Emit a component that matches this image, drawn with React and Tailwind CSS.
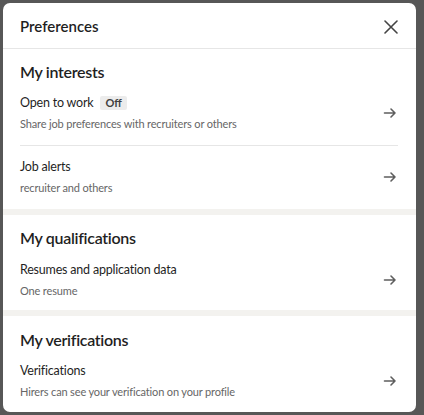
import React from "react";

function Arrow() {
  return (
    <svg width="14" height="12" viewBox="0 0 14 12" fill="none" className="shrink-0">
      <path d="M1.5 6H12M8 2l4 4-4 4" stroke="#5e5e5e" strokeWidth="1.6" strokeLinecap="round" strokeLinejoin="round" />
    </svg>
  );
}

function Item({ title, badge, subtitle, border, pt = "pt-[10px]", pb = "pb-[12px]" }) {
  return (
    <div className={`flex items-center justify-between ${pt} ${pb} ${border ? "border-b border-[#e6e6e6]" : ""}`}>
      <div className="flex flex-col">
        <div className="flex items-center h-[20px]">
          <span className="text-[12.5px] tracking-[-0.2px] text-[#1f1f1f]">{title}</span>
          {badge && (
            <span className="ml-[7px] px-[5px] h-[14px] flex items-center rounded-[2px] bg-[#ececec] text-[11px] font-bold text-[#404040]">
              {badge}
            </span>
          )}
        </div>
        <div className="mt-[3px] h-[16px] leading-[16px] text-[11px] tracking-[-0.15px] text-[#666]">{subtitle}</div>
      </div>
      <div className="mr-[1px]"><Arrow /></div>
    </div>
  );
}

export default function App() {
  return (
    <div
      className="w-[424px] h-[415px] bg-[#575757] pt-[3px] pl-[3px] overflow-hidden"
      style={{ fontFamily: 'Lato, "Noto Sans", sans-serif' }}
    >
      <div className="w-[413px] h-[409px] bg-white rounded-[7px] overflow-hidden flex flex-col">
        <div className="h-[46px] pt-[2px] shrink-0 flex items-center justify-between pl-[17px] pr-[18px] border-b border-[#e6e6e6]">
          <span className="text-[15px] font-semibold text-[#1f1f1f]">Preferences</span>
          <svg width="14" height="14" viewBox="0 0 14 14" fill="none">
            <path d="M1 1l12 12M13 1L1 13" stroke="#444" strokeWidth="1.6" strokeLinecap="round" />
          </svg>
        </div>

        <div className="pl-[17px] pr-[18px]">
          <div className="pt-[11px] h-[35px] leading-[24px] text-[16px] tracking-[-0.3px] font-semibold text-[#1f1f1f]">My interests</div>
          <Item title="Open to work" badge="Off" subtitle="Share job preferences with recruiters or others" border pt="pt-[9px]" pb="pb-[13px]" />
          <Item title="Job alerts" subtitle="recruiter and others" pt="pt-[11px]" pb="pb-[13px]" />
        </div>

        <div className="h-[6px] bg-[#f3f2ef] shrink-0" />

        <div className="pl-[17px] pr-[18px]">
          <div className="pt-[11px] h-[35px] leading-[24px] text-[16px] tracking-[-0.3px] font-semibold text-[#1f1f1f]">My qualifications</div>
          <Item title="Resumes and application data" subtitle="One resume" pt="pt-[10px]" pb="pb-[11px]" />
        </div>

        <div className="h-[6px] bg-[#f3f2ef] shrink-0" />

        <div className="pl-[17px] pr-[18px]">
          <div className="pt-[12px] h-[36px] leading-[24px] text-[16px] tracking-[-0.3px] font-semibold text-[#1f1f1f]">My verifications</div>
          <Item title="Verifications" subtitle="Hirers can see your verification on your profile" pt="pt-[9px]" />
        </div>
      </div>
    </div>
  );
}
